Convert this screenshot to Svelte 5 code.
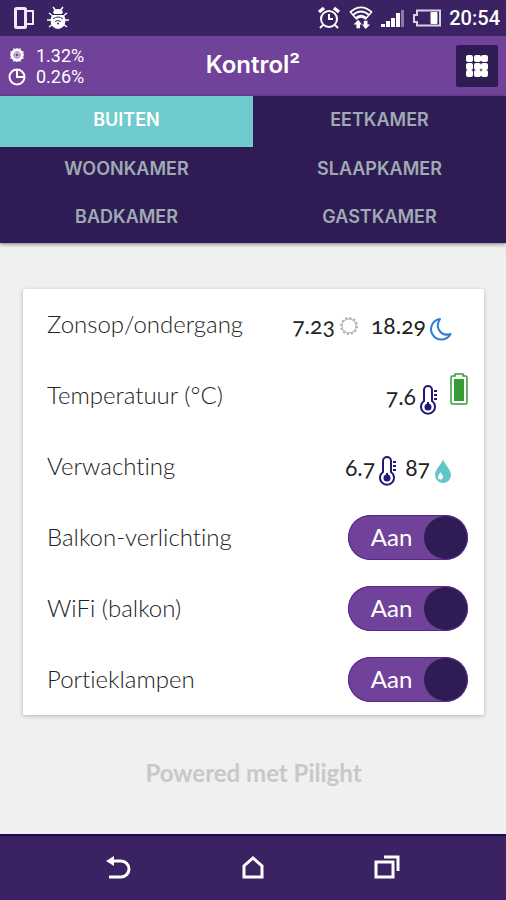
<script lang="ts">
  type Reading = { value: string; icon: 'sun' | 'moon' | 'thermometer' | 'drop' };

  const rooms = ['Buiten', 'Eetkamer', 'Woonkamer', 'Slaapkamer', 'Badkamer', 'Gastkamer'];
  let activeRoom = $state('Buiten');

  const sensors: { name: string; readings: Reading[]; battery?: boolean }[] = [
    {
      name: 'Zonsop/ondergang',
      readings: [
        { value: '7.23', icon: 'sun' },
        { value: '18.29', icon: 'moon' },
      ],
    },
    {
      name: 'Temperatuur (°C)',
      readings: [{ value: '7.6', icon: 'thermometer' }],
      battery: true,
    },
    {
      name: 'Verwachting',
      readings: [
        { value: '6.7', icon: 'thermometer' },
        { value: '87', icon: 'drop' },
      ],
    },
  ];

  let switches = $state([
    { id: 'balkon', name: 'Balkon-verlichting', on: true },
    { id: 'wifi', name: 'WiFi (balkon)', on: true },
    { id: 'portiek', name: 'Portieklampen', on: true },
  ]);
</script>

{#snippet icon(name: string)}
  {#if name === 'sun'}
    <svg class="sun" width="20" height="20" viewBox="0 0 20 20" fill="none" stroke="#b0b0b0">
      <circle cx="10" cy="10" r="7" stroke-width="1" />
      <circle cx="10" cy="10" r="8" stroke-width="2" stroke-dasharray="2.200 1.990" />
    </svg>
  {:else if name === 'moon'}
    <svg width="22" height="24" viewBox="0 0 22 24" fill="none" stroke="#2f7bdc" stroke-width="2" stroke-linejoin="round">
      <path d="M10 2A10.300 10.300 0 1 0 20.500 17C10.500 20 4.500 10 10 2Z" />
    </svg>
  {:else if name === 'thermometer'}
    <svg width="18" height="30" viewBox="0 0 18 30" fill="none" stroke="#1f1a78" stroke-width="2">
      <path d="M4 16V5a4 4 0 0 1 8 0v11a7 7 0 1 1-8 0Z" />
      <circle cx="8" cy="22" r="3.500" fill="#1f1a78" stroke="none" />
      <path d="M8 17v4M14 6h3M14 10h3M14 14h3" />
    </svg>
  {:else}
    <svg width="18" height="24" viewBox="0 0 18 24">
      <path d="M9 0C8 5 1 10 1 16a8 8 0 0 0 16 0C17 10 10 5 9 0Z" fill="#62c5c8" />
      <path d="M6.500 13C6 15 4 16 4 18a2.500 2.500 0 0 0 5 0c0-2-2-3-2.500-5Z" fill="#fff" />
    </svg>
  {/if}
{/snippet}

<div class="screen">
  <div class="status-bar">
    <div class="status-group">
      <svg width="20" height="22" viewBox="0 0 20 22" fill="none" stroke="#eee8f7" stroke-width="2">
        <rect x="1.500" y="1.500" width="10" height="19" rx="1" stroke-width="3" />
        <path d="M11 4h8v13h-8" />
      </svg>
      <svg width="22" height="24" viewBox="0 0 22 24">
        <path d="M6 1l3 4M16 1l-3 4M2 7l4 3M20 7l-4 3M0 14h4M18 14h4M2 21l4-3M20 21l-4-3" stroke="#fff" stroke-width="1.500" />
        <ellipse cx="11" cy="14.500" rx="7.500" ry="8.500" fill="#fff" />
        <path d="M6 7a5 4 0 0 1 10 0Z" fill="#fff" />
        <path d="M5 8.500h12M6 13q5-4 10 0M8 15.500q3-2 6 0" fill="none" stroke="#3b2263" />
        <circle cx="11" cy="17.500" r="1" fill="#3b2263" />
      </svg>
    </div>
    <div class="status-group">
      <svg width="24" height="24" viewBox="0 0 24 24" fill="none" stroke="#fff" stroke-width="2">
        <circle cx="12" cy="13" r="8" />
        <path d="M12 8v5h4M6 19l-3 3M18 19l3 3" />
        <path d="M2 6l5-4M22 6l-5-4" stroke-width="3.500" />
      </svg>
      <svg width="24" height="26" viewBox="0 0 26 26" fill="none" stroke="#fff">
        <path d="M1 7q12-11 24 0M4 10q9-8 18 0M7 13q6-5 12 0" stroke-width="2" />
        <path d="M2 7l6 7q5-4 10 0l6-7" stroke-width="1.500" />
        <path d="M10 15l-5 5h3v4h4v-4h2ZM18 25l5-5h-3v-4h-4v4h-2Z" fill="#fff" stroke="none" />
      </svg>
      <svg width="24" height="20" viewBox="0 0 24 20" fill="#fff">
        <path d="M0 16h4v3H0ZM5 13h4v6H5ZM10 10h4v9h-4ZM15 5h4v14h-4Z" />
        <path d="M20 2h3v17h-3Z" fill="#8b7aa9" />
      </svg>
      <svg width="28" height="18" viewBox="0 0 28 18" fill="none" stroke="#d8d0e5" stroke-width="2">
        <path d="M4 1.500h23v15H4V13H1V6h3Z" />
        <path d="M18 3.500h6v11h-6Z" fill="#fff" stroke="#fff" stroke-width="1" />
      </svg>
      <span class="clock">20:54</span>
    </div>
  </div>

  <header>
    <div class="usage">
      <div>
        <svg width="18" height="18" viewBox="0 0 18 18" fill="none" stroke="#fff">
          <circle cx="9" cy="8" r="5" stroke-width="3" />
          <path d="M6 1v14M9 1v14M12 1v14M2 5h14M2 8h14M2 11h14" stroke-dasharray="3 8" />
          <rect x="7" y="6" width="4" height="4" stroke-width="1" />
        </svg>
        <span>1.32%</span>
      </div>
      <div>
        <svg width="18" height="18" viewBox="0 0 18 18" fill="none" stroke="#fff" stroke-width="2">
          <circle cx="9" cy="9" r="7.500" />
          <path d="M9 1v8h8" />
        </svg>
        <span>0.26%</span>
      </div>
    </div>
    <h1>Kontrol²</h1>
    <button class="grid-button" aria-label="Menu">
      <svg width="22" height="22" viewBox="0 0 22 22" fill="#fff">
        {#each [0, 8, 15] as y}
          {#each [0, 8, 15] as x}
            <rect {x} {y} width="7" height="7" rx="2" />
          {/each}
        {/each}
      </svg>
    </button>
  </header>

  <nav class="rooms">
    {#each rooms as room}
      <button class:active={room === activeRoom} onclick={() => (activeRoom = room)}>{room}</button>
    {/each}
  </nav>

  <main>
    <section class="card">
      {#each sensors as sensor}
        <div class="row">
          <span class="name">{sensor.name}</span>
          <div class="readings" class:has-battery={sensor.battery}>
            {#each sensor.readings as reading}
              <span class="reading">{reading.value}{@render icon(reading.icon)}</span>
            {/each}
            {#if sensor.battery}
              <svg class="battery" width="18" height="32" viewBox="0 0 18 32">
                <path d="M5 3V1h8v2h2.500q1.500 0 1.500 1.500v25q0 1.500-1.500 1.500h-13Q1 31 1 29.500v-25Q1 3 2.500 3Z" fill="#fff" stroke="#379b38" stroke-width="1.500" />
                <path d="M4 6h10v22H4Z" fill="#379b38" />
              </svg>
            {/if}
          </div>
        </div>
      {/each}
      {#each switches as item}
        <div class="row">
          <label class="name" for={item.id}>{item.name}</label>
          <label class="switch" class:on={item.on}>
            <input id={item.id} type="checkbox" bind:checked={item.on} />
            <span class="state">{item.on ? 'Aan' : 'Uit'}</span>
            <span class="knob"></span>
          </label>
        </div>
      {/each}
    </section>
    <p class="powered">Powered met Pilight</p>
  </main>

  <div class="system-nav">
    <button aria-label="Terug">
      <svg width="26" height="26" viewBox="0 0 26 26" fill="none" stroke="#fff" stroke-width="3">
        <path d="M6 6h9a8 8 0 0 1 0 16H3" />
        <path d="M0 6l8-5v10Z" fill="#fff" stroke="none" />
      </svg>
    </button>
    <button aria-label="Start">
      <svg width="24" height="26" viewBox="0 0 24 26" fill="none" stroke="#fff" stroke-width="3">
        <path d="M3 22V11l9-8 9 8v11Z" />
      </svg>
    </button>
    <button aria-label="Recent">
      <svg width="26" height="26" viewBox="0 0 26 26" fill="none" stroke="#fff" stroke-width="3">
        <path d="M2 7h17v15H2Z" />
        <path d="M10 2h14v14" />
      </svg>
    </button>
  </div>
</div>

<style>
  :global(body) {
    margin: 0;
    background: #f0f0f0;
  }

  .screen {
    min-height: 100vh;
    display: flex;
    flex-direction: column;
    font-family: Lato, sans-serif;
    font-variant-ligatures: none;
    color: #222;
  }

  button {
    border: 0;
    padding: 0;
    background: none;
    font: inherit;
    color: inherit;
    cursor: pointer;
  }

  svg {
    display: block;
    flex-shrink: 0;
  }

  .status-bar {
    height: 36px;
    padding: 0 6px 0 14px;
    display: flex;
    align-items: center;
    justify-content: space-between;
    background: #3b2263;
  }

  .status-group {
    display: flex;
    align-items: center;
    gap: 8px;
  }

  .status-group:first-child {
    gap: 13px;
  }

  .clock {
    font: 500 20px/24px Roboto, sans-serif;
    color: #fff;
  }

  header {
    height: 60px;
    padding: 0 8px;
    box-sizing: border-box;
    display: grid;
    grid-template-columns: 1fr auto 1fr;
    align-items: center;
    background: #714299;
    color: #fff;
  }

  .usage {
    font: 18px/21px Roboto, sans-serif;
  }

  .usage div {
    display: flex;
    align-items: center;
    gap: 10px;
  }

  h1 {
    margin: 0;
    padding-bottom: 2px;
    font: 600 24px/28px Inter, sans-serif;
  }

  .grid-button {
    width: 42px;
    height: 42px;
    justify-self: end;
    display: grid;
    place-items: center;
    background: #301c54;
    border-radius: 2px;
  }

  .rooms {
    display: grid;
    grid-template-columns: 1fr 1fr;
    grid-template-rows: 51px 48px 48px;
    background: #301c54;
    box-shadow: 0 1px 4px rgba(0, 0, 0, 0.5);
  }

  .rooms button {
    padding-bottom: 4px;
    font: 600 18px/24px Inter, sans-serif;
    text-transform: uppercase;
    color: #9fabb3;
  }

  .rooms .active {
    background: #70cbce;
    color: #fff;
  }

  main {
    flex: 1;
    padding: 46px 22px 0 23px;
  }

  .card {
    background: #fff;
    border-radius: 2px;
    box-shadow: 0 1px 4px rgba(0, 0, 0, 0.25);
  }

  .row {
    height: 71px;
    padding: 0 16px 0 24px;
    display: flex;
    align-items: center;
    justify-content: space-between;
  }

  .name {
    padding-bottom: 2px;
    font-size: 24px;
    line-height: 30px;
    font-weight: 300;
  }

  .readings {
    display: flex;
    align-items: center;
    gap: 8px;
    padding-right: 16px;
    font-size: 23px;
    line-height: 30px;
    font-variant-numeric: oldstyle-nums;
  }

  .reading {
    display: flex;
    align-items: center;
    gap: 4px;
  }

  .reading svg {
    margin-top: 8px;
  }

  .reading .sun {
    margin: 2px 4px 0 0;
  }

  .has-battery {
    gap: 12px;
    padding: 0;
  }

  .battery {
    margin-bottom: 14px;
  }

  .switch {
    width: 120px;
    height: 45px;
    box-sizing: border-box;
    position: relative;
    display: flex;
    align-items: center;
    flex-direction: row-reverse;
    padding: 1px;
    border-radius: 23px;
    background: #999;
    color: #fff;
    cursor: pointer;
  }

  .switch.on {
    flex-direction: row;
    background: #714299;
    box-shadow: inset 0 0 0 1px #59268a;
  }

  .switch input {
    position: absolute;
    inset: 0;
    width: 100%;
    height: 100%;
    margin: 0;
    opacity: 0;
    cursor: pointer;
  }

  .state {
    flex: 1;
    padding: 0 0 2px 10px;
    text-align: center;
    font-size: 24px;
    line-height: 30px;
  }

  .knob {
    width: 43px;
    height: 43px;
    flex-shrink: 0;
    border-radius: 50%;
    background: #301c54;
  }

  .powered {
    margin: 44px 0 0;
    font-size: 24px;
    line-height: 28px;
    font-weight: 700;
    text-align: center;
    color: #c8c8c8;
  }

  .system-nav {
    height: 66px;
    box-sizing: border-box;
    padding: 0 52px;
    display: grid;
    grid-template-columns: repeat(3, 1fr);
    background: #3b2263;
    border-top: 2px solid #1d0c4d;
  }

  .system-nav button {
    display: grid;
    place-items: center;
  }
</style>
